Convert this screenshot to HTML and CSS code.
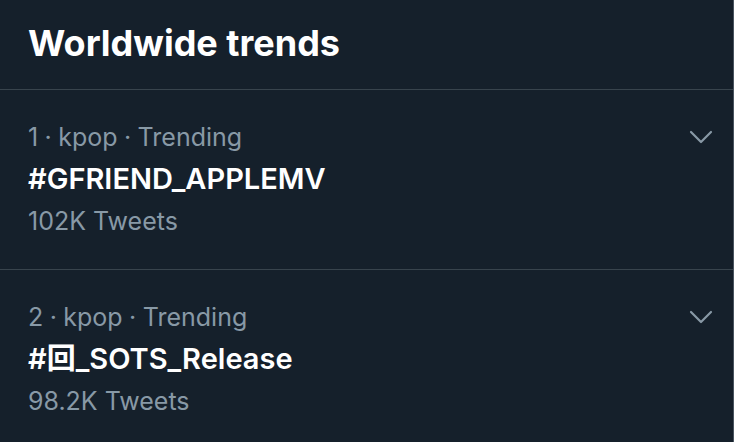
FILE: index.html
```html
<!DOCTYPE html>
<html>
<head>
<meta charset="utf-8">
<link rel="stylesheet" href="styles.css">
</head>
<body>
<div class="panel">
  <div class="header"><h1 class="title">Worldwide trends</h1></div>
  <div class="trend">
    <div class="info">
      <div class="meta">1 · kpop · Trending</div>
      <div class="name">#GFRIEND_APPLEMV</div>
      <div class="count">102K Tweets</div>
    </div>
    <svg class="chev" width="24" height="14" viewBox="0 0 24 14"><path d="M2 2 L12 12 L22 2" fill="none" stroke="currentColor" stroke-width="2.2" stroke-linecap="round" stroke-linejoin="round"/></svg>
  </div>
  <div class="trend">
    <div class="info">
      <div class="meta">2 · kpop · Trending</div>
      <div class="name">#回_SOTS_Release</div>
      <div class="count">98.2K Tweets</div>
    </div>
    <svg class="chev" width="24" height="14" viewBox="0 0 24 14"><path d="M2 2 L12 12 L22 2" fill="none" stroke="currentColor" stroke-width="2.2" stroke-linecap="round" stroke-linejoin="round"/></svg>
  </div>
</div>
</body>
</html>
```
FILE: styles.css
```css
html, body {
  margin: 0;
  padding: 0;
  background: #15202b;
}
body {
  font-family: Inter, "Noto Sans CJK KR", sans-serif;
  width: 734px;
  height: 442px;
  overflow: hidden;
}
.panel {
  width: 733px;
  height: 442px;
  border-right: 1px solid #4a5560;
}
.header {
  height: 90px;
  box-sizing: border-box;
  padding: 21px 0 0 28px;
  border-bottom: 1px solid #38444d;
}
.title {
  margin: 0;
  font-size: 36px;
  line-height: 44px;
  font-weight: 700;
  color: #ffffff;
}
.trend {
  height: 180px;
  box-sizing: border-box;
  padding: 32px 20px 0 28px;
  border-bottom: 1px solid #38444d;
  display: flex;
  justify-content: space-between;
  align-items: flex-start;
}
.info {
  display: flex;
  flex-direction: column;
}
.meta {
  font-size: 25px;
  line-height: 30px;
  color: #8899a6;
  word-spacing: -0.6px;
}
.name {
  margin-top: 9px;
  font-size: 29px;
  line-height: 36px;
  font-weight: 600;
  color: #ffffff;
}
.count {
  margin-top: 9px;
  font-size: 25px;
  line-height: 30px;
  color: #8899a6;
}
.chev {
  margin-top: 8px;
  color: #8899a6;
}
```
